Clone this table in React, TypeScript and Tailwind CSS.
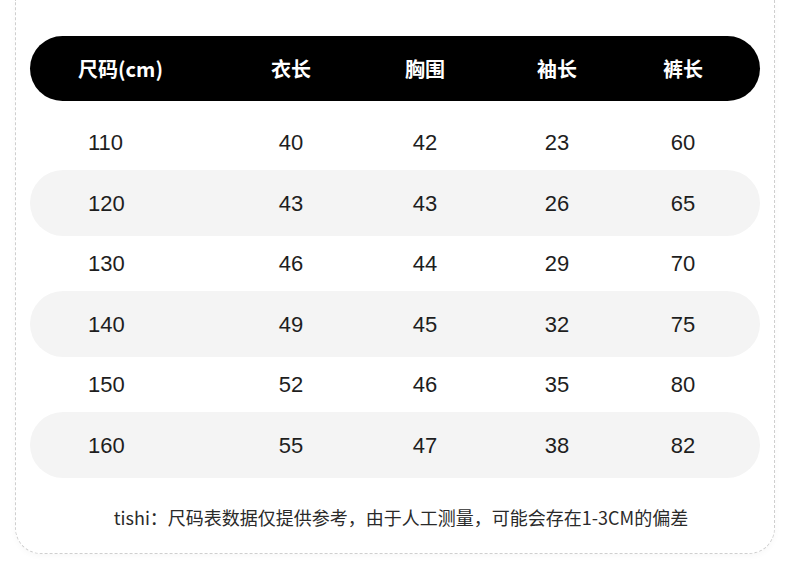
import React from 'react';

const rows = [
  ['110', '40', '42', '23', '60'],
  ['120', '43', '43', '26', '65'],
  ['130', '46', '44', '29', '70'],
  ['140', '49', '45', '32', '75'],
  ['150', '52', '46', '35', '80'],
  ['160', '55', '47', '38', '82'],
];

const cols = 'grid grid-cols-[196px_130px_138px_126px_126px_14px] items-center';

export default function App() {
  return (
    <div className="w-[790px] h-[582px] bg-white px-[15px] pb-[28px] font-['Noto_Sans_CJK_SC',sans-serif]">
      <div className="h-full border-x border-b border-dashed border-[#cfcfcf] rounded-b-[26px] px-[14px] pt-[36px] shadow-[0_2px_6px_rgba(0,0,0,0.03)]">
        {/* header */}
        <div className={`${cols} h-[65px] rounded-full bg-black text-white text-[20px] font-bold`}>
          <div className="pl-[48px]">尺码(cm)</div>
          <div className="text-center">衣长</div>
          <div className="text-center">胸围</div>
          <div className="text-center">袖长</div>
          <div className="text-center">裤长</div>
          <div />
        </div>

        <div className="mt-[14px] font-['Liberation_Sans',sans-serif] text-[22px] text-[#1e1e1e]">
          {rows.map((r, i) => (
            <div
              key={r[0]}
              className={`${cols} ${i % 2 === 1 ? 'h-[66px] bg-[#f4f4f4] rounded-full' : 'h-[55px]'}`}
            >
              <div className="pl-[58px]">{r[0]}</div>
              <div className="text-center">{r[1]}</div>
              <div className="text-center">{r[2]}</div>
              <div className="text-center">{r[3]}</div>
              <div className="text-center">{r[4]}</div>
              <div />
            </div>
          ))}
        </div>

        <div className="mt-[26px] pl-[12px] text-center text-[18px] leading-[26px] text-[#2a2a2a]">
          tishi：尺码表数据仅提供参考，由于人工测量，可能会存在1-3CM的偏差
        </div>
      </div>
    </div>
  );
}
